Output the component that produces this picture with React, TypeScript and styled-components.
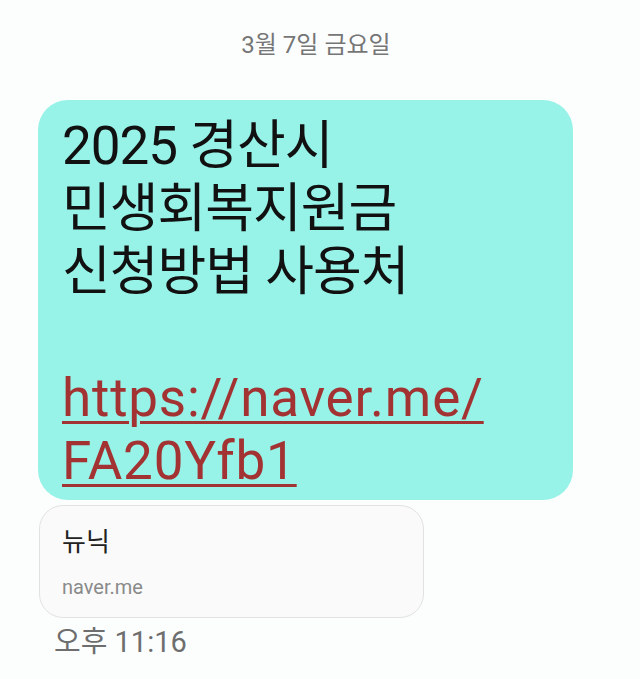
import styled, { createGlobalStyle } from "styled-components";

const GlobalStyle = createGlobalStyle`
  html, body {
    margin: 0;
    padding: 0;
    background: #fcfefe;
  }
  body {
    font-family: Roboto, "Noto Sans CJK KR", sans-serif;
    -webkit-font-smoothing: antialiased;
  }
`;

const Screen = styled.div`
  width: 640px;
  height: 679px;
  overflow: hidden;
  display: flex;
  flex-direction: column;
  align-items: flex-start;
`;

const DateLabel = styled.div`
  align-self: center;
  margin-top: 31px;
  margin-right: 8px;
  font-size: 24px;
  line-height: 28px;
  color: #767676;
`;

const Bubble = styled.div`
  margin-top: 41px;
  margin-left: 38px;
  width: 535px;
  box-sizing: border-box;
  padding: 15px 24px 7px 24px;
  background: #97f2e8;
  border-radius: 30px;
  font-size: 53px;
  line-height: 63px;
  color: #111;
`;

const TextLine = styled.div`
  letter-spacing: -1px;
`;

const Blank = styled.div`
  height: 63px;
`;

const Link = styled.a`
  color: #a33333;
  letter-spacing: 0.8px;
  text-decoration: underline;
  text-decoration-thickness: 3px;
  text-underline-offset: 5px;
`;

const PreviewCard = styled.div`
  margin-top: 5px;
  margin-left: 39px;
  width: 385px;
  height: 113px;
  box-sizing: border-box;
  padding: 21px 22px 0 22px;
  background: #fafafa;
  border: 1.5px solid #e2e2e2;
  border-radius: 24px;
  display: flex;
  flex-direction: column;
  gap: 18px;
`;

const PreviewTitle = styled.div`
  font-size: 26px;
  line-height: 30px;
  color: #222;
`;

const PreviewHost = styled.div`
  font-size: 20px;
  line-height: 24px;
  color: #8a8a8a;
`;

const TimeLabel = styled.div`
  margin-top: 8px;
  margin-left: 54px;
  font-size: 29px;
  line-height: 32px;
  color: #6e6e6e;
`;

export default function App() {
  return (
    <Screen>
      <GlobalStyle />
      <DateLabel>3월 7일 금요일</DateLabel>
      <Bubble>
        <TextLine>2025 경산시</TextLine>
        <TextLine>민생회복지원금</TextLine>
        <TextLine>신청방법 사용처</TextLine>
        <Blank />
        <Link href="#">
          https://naver.me/
          <br />
          FA20Yfb1
        </Link>
      </Bubble>
      <PreviewCard>
        <PreviewTitle>뉴닉</PreviewTitle>
        <PreviewHost>naver.me</PreviewHost>
      </PreviewCard>
      <TimeLabel>오후 11:16</TimeLabel>
    </Screen>
  );
}
